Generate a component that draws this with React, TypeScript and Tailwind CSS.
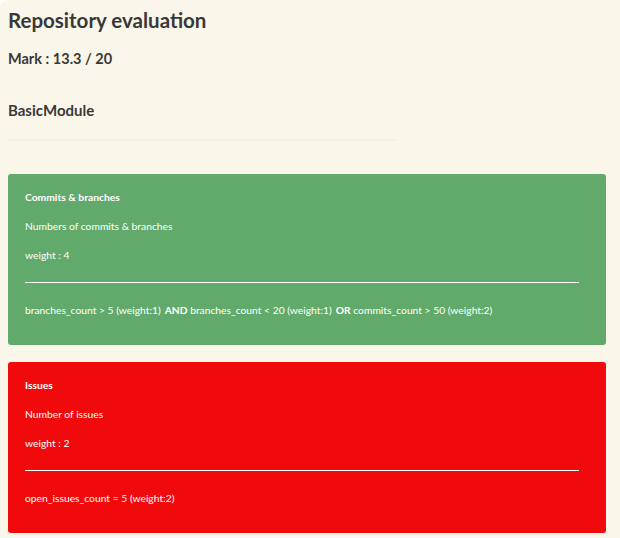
import React from 'react';

type Rule = { text: string; op?: string };

const criteria = [
  {
    title: 'Commits & branches',
    description: 'Numbers of commits & branches',
    weight: 4,
    color: 'bg-[#62aa6b]',
    rules: [
      { text: 'branches_count > 5 (weight:1)' },
      { op: 'AND', text: 'branches_count < 20 (weight:1)' },
      { op: 'OR', text: 'commits_count > 50 (weight:2)' },
    ] as Rule[],
  },
  {
    title: 'Issues',
    description: 'Number of issues',
    weight: 2,
    color: 'bg-[#f00a0c]',
    rules: [{ text: 'open_issues_count = 5 (weight:2)' }] as Rule[],
  },
];

export default function App() {
  return (
    <div className="min-h-screen bg-white">
      <div className="min-h-[538px] bg-[#fbf6ea] rounded-tl-lg pl-2 pr-[14px] pb-2 font-['Lato',sans-serif] text-[#383838]">
        <h1 className="pt-[8px] text-[20.5px] font-bold leading-[24px]">Repository evaluation</h1>
        <h2 className="mt-[18px] text-[14.5px] font-bold leading-[18px]">Mark : 13.3 / 20</h2>
        <h3 className="mt-[33px] text-[15px] font-bold leading-[18px]">BasicModule</h3>
        <div className="mt-[20px] h-[2px] w-[388px] bg-[#f4efe5]" />

        <div className="mt-[33px] flex flex-col gap-[17px]">
          {criteria.map((c) => (
            <div key={c.title} className={`${c.color} rounded-[3px] pl-[17px] pr-[27px] pt-[16px] pb-[28px] text-white text-[10.3px]`}>
              <div className="font-bold leading-[14px]">{c.title}</div>
              <div className="mt-[15px] leading-[14px]">{c.description}</div>
              <div className="mt-[15px] leading-[14px]">weight : {c.weight}</div>
              <div className="mt-[20px] h-[1px] bg-white" />
              <div className="mt-[20px] leading-[14px]">
                {c.rules.map((r, i) => (
                  <span key={i}>
                    {r.op && <b className="font-bold ml-[4px]">{r.op} </b>}
                    {r.text}
                  </span>
                ))}
              </div>
            </div>
          ))}
        </div>
      </div>
    </div>
  );
}
